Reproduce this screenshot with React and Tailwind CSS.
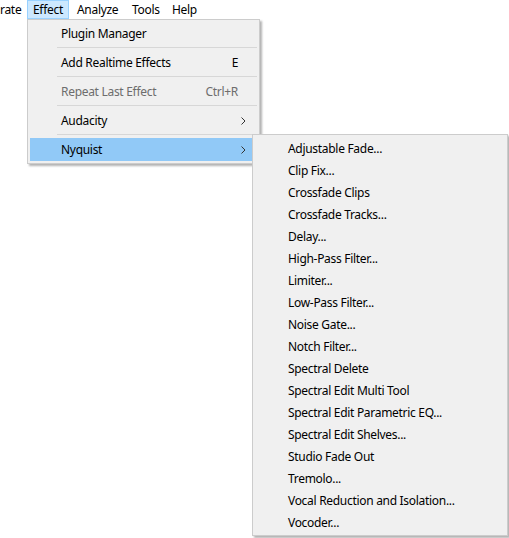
import React from 'react';

const nyquistItems = [
  'Adjustable Fade...',
  'Clip Fix...',
  'Crossfade Clips',
  'Crossfade Tracks...',
  'Delay...',
  'High-Pass Filter...',
  'Limiter...',
  'Low-Pass Filter...',
  'Noise Gate...',
  'Notch Filter...',
  'Spectral Delete',
  'Spectral Edit Multi Tool',
  'Spectral Edit Parametric EQ...',
  'Spectral Edit Shelves...',
  'Studio Fade Out',
  'Tremolo...',
  'Vocal Reduction and Isolation...',
  'Vocoder...',
];

const Chevron = () => (
  <svg width="5" height="8" viewBox="0 0 5 8" className="block">
    <path d="M0.5 0.5 L4 4 L0.5 7.5" fill="none" stroke="#333" strokeWidth="1" />
  </svg>
);

const Separator = () => (
  <div className="h-[6px] flex items-start pt-[2px]">
    <div className="ml-[27px] flex-1 h-px bg-[#d7d7d7]" />
  </div>
);

const MenuRow = ({ label, shortcut, arrow, disabled, active }) => (
  <div
    className={`h-[23px] flex items-center pl-[31px] pt-px ${active ? 'bg-[#91c9f7]' : ''} ${disabled ? 'text-[#6d6d6d]' : 'text-black'}`}
  >
    <span className="flex-1">{label}</span>
    {shortcut && <span className="mr-[19px]">{shortcut}</span>}
    {arrow && (
      <span className="mr-[11px] -mt-px">
        <Chevron />
      </span>
    )}
  </div>
);

export default function App() {
  return (
    <div
      className="relative w-[509px] h-[538px] bg-white overflow-hidden text-[12px] leading-none tracking-[-0.3px]"
      style={{ fontFamily: '"Noto Sans", "Open Sans", sans-serif' }}
    >
      {/* Menu bar */}
      <div className="h-[19px] flex items-stretch text-black">
        <div className="w-[27px] flex items-center">rate</div>
        <div className="w-[42px] flex items-center pl-[5px] bg-[#cce8ff] border border-[#99d1ff]">Effect</div>
        <div className="w-[55px] flex items-center pl-[8px]">Analyze</div>
        <div className="w-[41px] flex items-center pl-[8px]">Tools</div>
        <div className="w-[40px] flex items-center pl-[7px]">Help</div>
      </div>

      {/* Effect dropdown */}
      <div className="absolute left-[27px] top-[19px] w-[233px] bg-[#f0f0f0] border border-[#cccccc] p-[2px] shadow-[2px_2px_2px_rgba(0,0,0,0.3)]">
        <MenuRow label="Plugin Manager" />
        <Separator />
        <MenuRow label="Add Realtime Effects" shortcut="E" />
        <Separator />
        <MenuRow label="Repeat Last Effect" shortcut="Ctrl+R" disabled />
        <Separator />
        <MenuRow label="Audacity" arrow />
        <Separator />
        <MenuRow label="Nyquist" arrow active />
      </div>

      {/* Nyquist submenu */}
      <div className="absolute left-[252px] top-[134px] w-[256px] bg-[#f0f0f0] border border-[#cccccc] p-[2px] shadow-[2px_2px_2px_rgba(0,0,0,0.3)]">
        {nyquistItems.map((item) => (
          <div key={item} className="h-[22px] flex items-center pl-[33px] pt-px text-black">
            {item}
          </div>
        ))}
      </div>
    </div>
  );
}
